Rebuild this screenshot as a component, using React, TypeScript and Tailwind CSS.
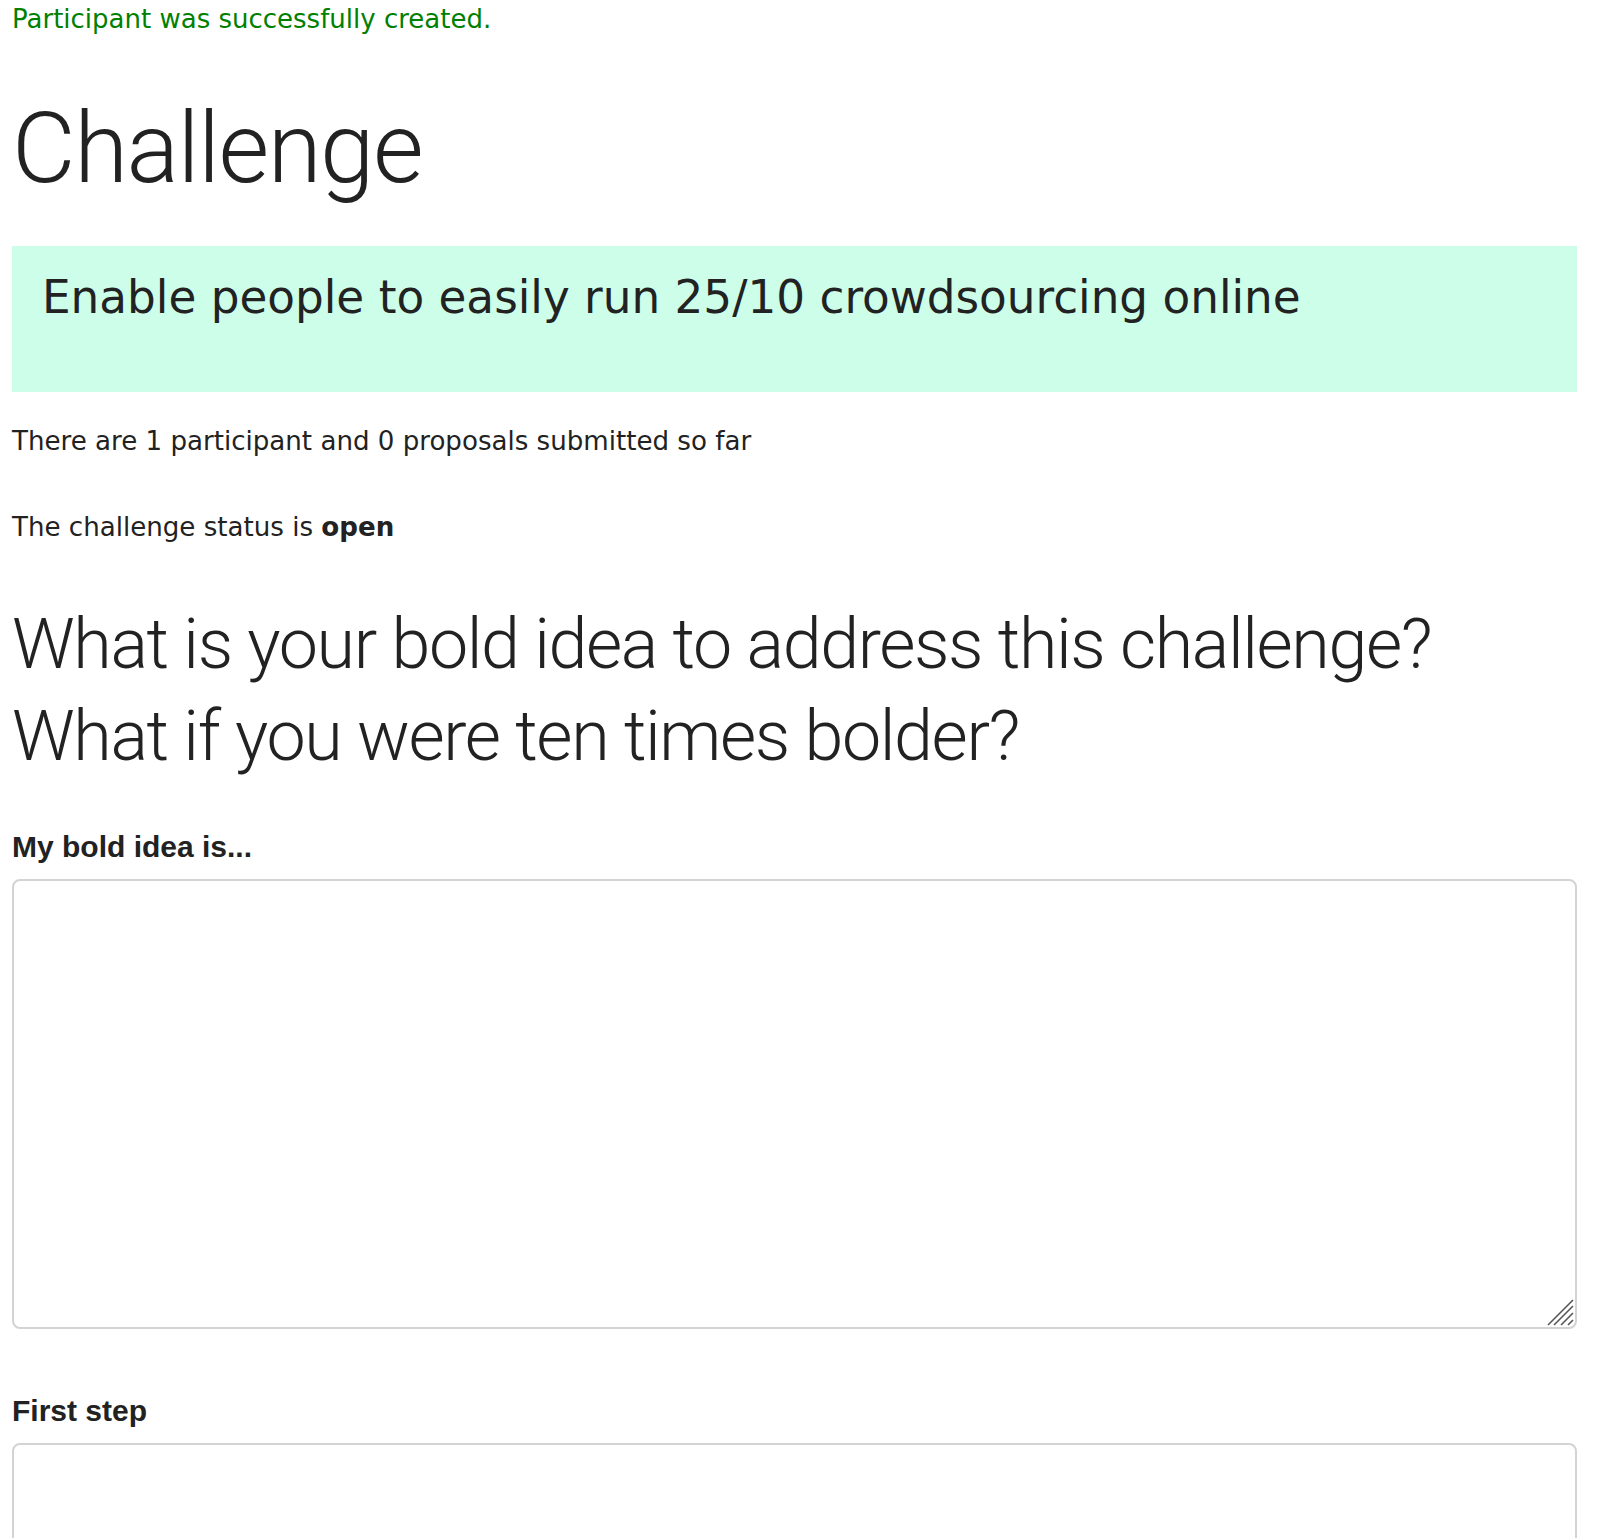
import React from 'react';

const body = "font-['DejaVu_Sans',Verdana,sans-serif]";
const display = "font-['Roboto','Liberation_Sans',sans-serif]";
const strong = "font-['Liberation_Sans',Arial,sans-serif]";

function ResizeGrip() {
  return (
    <svg
      className="pointer-events-none absolute right-0 bottom-0"
      width="30"
      height="30"
      viewBox="0 0 30 30"
      fill="none"
      stroke="#555"
      strokeWidth="1.6"
    >
      <line x1="1" y1="26" x2="26" y2="1" />
      <line x1="7" y1="26" x2="26" y2="7" />
      <line x1="14" y1="26" x2="26" y2="14" />
      <line x1="21" y1="26" x2="26" y2="21" />
    </svg>
  );
}

function Field({ label, height, grip }: { label: string; height: string; grip?: boolean }) {
  return (
    <div className="flex flex-col">
      <label className={`${strong} text-[30px] font-bold leading-[45px] text-[#222]`}>{label}</label>
      <div className="relative mt-[10px]">
        <textarea
          className={`block w-full ${height} resize-none rounded-[8px] border-2 border-[#d3d3d3] bg-white outline-none`}
        />
        {grip && <ResizeGrip />}
      </div>
    </div>
  );
}

export default function App() {
  return (
    <div className={`min-h-screen bg-white ${body} text-[#222]`}>
      <div className="ml-[12px] flex w-[1565px] flex-col">
        <p className="text-[26px] leading-[39px] text-[#008000]">Participant was successfully created.</p>

        <h1 className={`${display} mt-[56px] text-[98px] font-light leading-[108px] tracking-[-1.5px] text-[#222]`}>
          Challenge
        </h1>

        {/* challenge statement */}
        <div className="mt-[43px] bg-[#ccfeea] pt-[26px] pb-[68px] pl-[30px]">
          <p className="text-[45.3px] leading-[52px]">Enable people to easily run 25/10 crowdsourcing online</p>
        </div>

        <p className="mt-[30px] text-[26.1px] leading-[39px]">There are 1 participant and 0 proposals submitted so far</p>
        <p className="mt-[47px] text-[26.1px] leading-[39px]">
          The challenge status is <b className="font-bold">open</b>
        </p>

        <h2 className={`${display} mt-[51px] text-[70px] font-light leading-[92px] tracking-[-1.4px] text-[#222]`}>
          What is your bold idea to address this challenge?
          <br />
          What if you were ten times bolder?
        </h2>

        <div className="mt-[42px]">
          <Field label="My bold idea is..." height="h-[450px]" grip />
        </div>

        <div className="mt-[59px]">
          <Field label="First step" height="h-[200px]" />
        </div>
      </div>
    </div>
  );
}
